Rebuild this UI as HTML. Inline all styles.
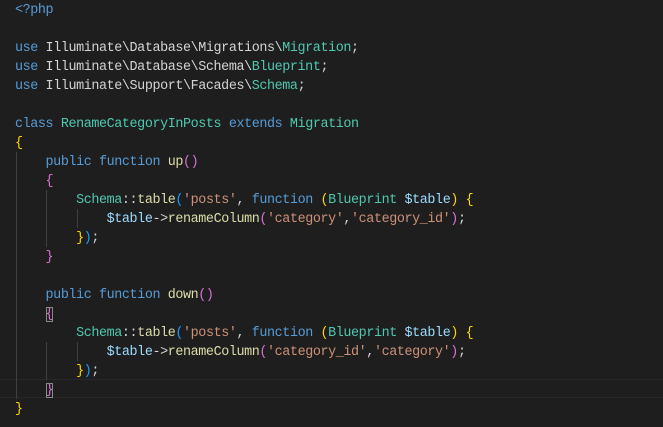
<!DOCTYPE html>
<html><head><style>
html,body{margin:0;padding:0;background:#1e1e1e;width:663px;height:427px;overflow:hidden}
.c{position:absolute;left:15px;top:1px;font-family:"Liberation Mono",monospace;font-size:13.4px;letter-spacing:-0.4px;line-height:19px;color:#d4d4d4;white-space:pre}
.k{color:#569cd6}.t{color:#4ec9b0}.s{color:#ce9178}.f{color:#dcdcaa}.v{color:#9cdcfe}
.y{color:#ffd700}.p{color:#da70d6}.b{color:#179fff}
.g{position:absolute;width:1px;background:#404040}
.cur{position:absolute;left:0;top:379px;width:663px;height:19px;box-sizing:border-box;border-top:1px solid #282828;border-bottom:1px solid #282828}
.box{outline:1px solid #888;outline-offset:-1px}
</style></head><body>
<div class="cur"></div>
<div class="g" style="left:16px;top:152px;height:247px"></div>
<div class="g" style="left:46px;top:190px;height:57px"></div>
<div class="g" style="left:46px;top:342px;height:38px"></div>
<div class="g" style="left:77px;top:209px;height:19px"></div>
<div class="g" style="left:77px;top:342px;height:19px"></div>
<div class="c"><span class="k">&lt;?php</span>

<span class="k">use</span> Illuminate\Database\Migrations\<span class="t">Migration</span>;
<span class="k">use</span> Illuminate\Database\Schema\<span class="t">Blueprint</span>;
<span class="k">use</span> Illuminate\Support\Facades\<span class="t">Schema</span>;

<span class="k">class</span> <span class="t">RenameCategoryInPosts</span> <span class="k">extends</span> <span class="t">Migration</span>
<span class="y">{</span>
    <span class="k">public</span> <span class="k">function</span> <span class="f">up</span><span class="p">()</span>
    <span class="p">{</span>
        <span class="t">Schema</span>::<span class="f">table</span><span class="b">(</span><span class="s">'posts'</span>, <span class="k">function</span> <span class="y">(</span><span class="t">Blueprint</span> <span class="v">$table</span><span class="y">)</span> <span class="y">{</span>
            <span class="v">$table</span>-&gt;<span class="f">renameColumn</span><span class="p">(</span><span class="s">'category'</span>,<span class="s">'category_id'</span><span class="p">)</span>;
        <span class="y">}</span><span class="b">)</span>;
    <span class="p">}</span>

    <span class="k">public</span> <span class="k">function</span> <span class="f">down</span><span class="p">()</span>
    <span class="p box">{</span>
        <span class="t">Schema</span>::<span class="f">table</span><span class="b">(</span><span class="s">'posts'</span>, <span class="k">function</span> <span class="y">(</span><span class="t">Blueprint</span> <span class="v">$table</span><span class="y">)</span> <span class="y">{</span>
            <span class="v">$table</span>-&gt;<span class="f">renameColumn</span><span class="p">(</span><span class="s">'category_id'</span>,<span class="s">'category'</span><span class="p">)</span>;
        <span class="y">}</span><span class="b">)</span>;
    <span class="p box">}</span>
<span class="y">}</span></div>
</body></html>
